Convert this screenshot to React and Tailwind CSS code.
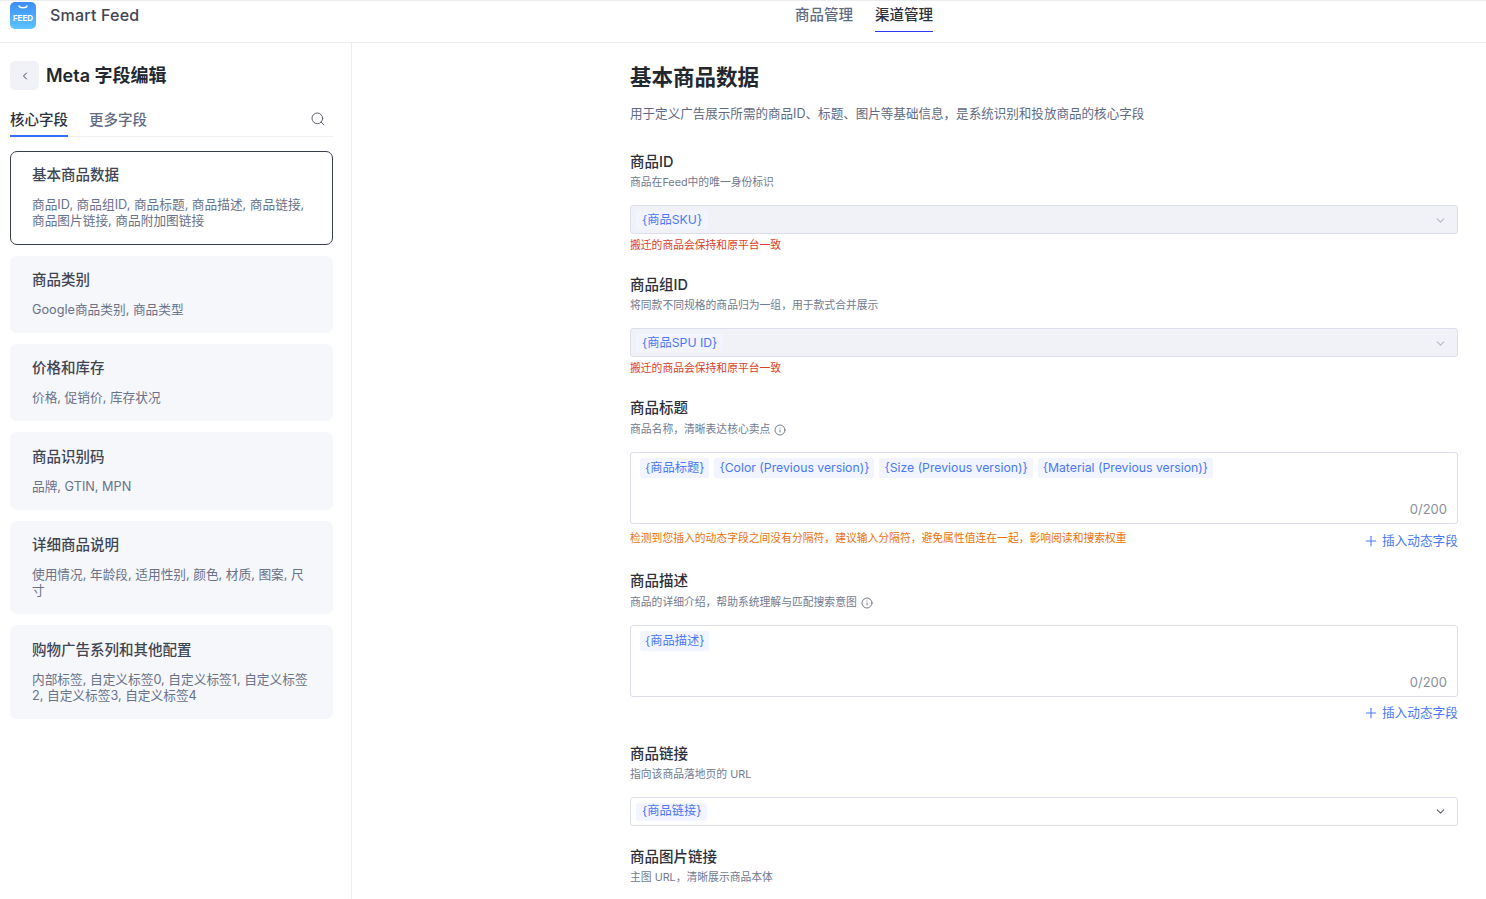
import React from "react";
import { ChevronDown, ChevronLeft, Info, Plus, Search } from "lucide-react";

const fontStack = "font-['Inter','Noto_Sans_CJK_SC',sans-serif]";

const groups = [
  { title: "基本商品数据", desc: "商品ID, 商品组ID, 商品标题, 商品描述, 商品链接, 商品图片链接, 商品附加图链接", active: true, h: "h-[94px] pt-[13px]" },
  { title: "商品类别", desc: "Google商品类别, 商品类型", h: "h-[77px] pt-[14px]" },
  { title: "价格和库存", desc: "价格, 促销价, 库存状况", h: "h-[77px] pt-[14px]" },
  { title: "商品识别码", desc: "品牌, GTIN, MPN", h: "h-[78px] pt-[15px]" },
  { title: "详细商品说明", desc: "使用情况, 年龄段, 适用性别, 颜色, 材质, 图案, 尺寸", h: "h-[93px] pt-[14px]" },
  { title: "购物广告系列和其他配置", desc: "内部标签, 自定义标签0, 自定义标签1, 自定义标签2, 自定义标签3, 自定义标签4", h: "h-[94px] pt-[15px]" },
];

const Chip = ({ children, compact }) => (
  <span
    className={`flex items-center rounded-[3px] bg-[#f2f5ff] text-[12.25px] text-[#4a78f5] whitespace-nowrap ${
      compact ? "h-[18px] px-[6px]" : "h-5 px-[5px]"
    }`}
  >
    {children}
  </span>
);

const FieldHead = ({ label, hint, info }) => (
  <div>
    <div className="text-[14.5px] leading-5 font-medium text-[#2b303b]">{label}</div>
    <div className={`flex items-center gap-1 text-[10.8px] leading-4 text-[#717a8f] ${info ? "mt-[4px]" : "mt-[3px]"}`}>
      {hint}
      {info && <Info size={12} strokeWidth={1.5} className="text-[#4b5161]" />}
    </div>
  </div>
);

const DisabledSelect = ({ value }) => (
  <div className="mt-[14px] h-[29px] flex items-center justify-between pl-[5px] pr-[10px] pt-[1px] rounded-[3px] border border-[#dcdfeb] bg-[#f0f2f8]">
    <Chip compact>{value}</Chip>
    <ChevronDown size={13} className="text-[#b4b9c6]" />
  </div>
);

const EditorBox = ({ chips }) => (
  <div className="mt-[14px] h-[72px] relative rounded-[3px] border border-[#dcdfeb] bg-white pl-[9px] pt-[5px]">
    <div className="flex gap-[5px]">
      {chips.map((c) => (
        <Chip key={c}>{c}</Chip>
      ))}
    </div>
    <span className="absolute right-[10px] bottom-[6px] text-[13px] leading-4 text-[#8a8f9b]">0/200</span>
  </div>
);

const InsertField = () => (
  <span className="flex items-center gap-[3px] text-[12.7px] leading-4 text-[#4a78f5] whitespace-nowrap">
    <Plus size={16} strokeWidth={1.6} />
    插入动态字段
  </span>
);

export default function App() {
  return (
    <div className={`${fontStack} h-[899px] overflow-hidden bg-white flex flex-col`}>
      {/* Top bar */}
      <header className="h-[43px] shrink-0 border-t border-b border-[#ebedf0] flex items-start relative">
        <div className="flex items-center pl-[10px] pt-[1px]">
          <div className="w-[26px] h-[27px] rounded-[5px] bg-gradient-to-b from-[#3f8cf7] to-[#5cc5fb] flex flex-col items-center">
            <svg width="12" height="5" viewBox="0 0 12 5" className="mt-[3px]">
              <path d="M2 1c1 2.4 7 2.4 8 0" fill="none" stroke="#fff" strokeWidth="1.4" strokeLinecap="round" />
            </svg>
            <span className="mt-[4px] text-[8px] leading-[9px] font-bold text-white">FEED</span>
          </div>
          <span className="ml-[14px] mb-[2px] text-base leading-6 font-medium text-[#3f4552] tracking-[0.2px]">Smart Feed</span>
        </div>
        <nav className="absolute left-[795px] top-0 flex gap-[22px] text-[14.5px] font-medium">
          <span className="h-[31px] pt-[4px] leading-5 text-[#5f6b85]">商品管理</span>
          <span className="h-[31px] pt-[4px] leading-5 text-[#2b303b] border-b border-[#2a3bef]">渠道管理</span>
        </nav>
      </header>

      <div className="flex flex-1 min-h-0">
        {/* Sidebar */}
        <aside className="w-[352px] shrink-0 border-r border-[#ebedf0] pl-[10px] pr-[18px] pt-[18px]">
          <div className="flex items-center gap-[7px]">
            <button className="w-[29px] h-[29px] rounded-[5px] bg-[#f0f2f8] flex items-center justify-center text-[#3c4250]">
              <ChevronLeft size={12} strokeWidth={2} />
            </button>
            <h1 className="text-lg leading-7 font-semibold text-[#23272f]">Meta 字段编辑</h1>
          </div>

          <div className="mt-[10px] h-[37px] flex items-center border-b border-[#f0f1f5]">
            <span className="h-[37px] pt-[1px] leading-[37px] text-[14.5px] font-medium text-[#2b303b] border-b-2 border-[#3370ff]">核心字段</span>
            <span className="ml-[21px] h-[37px] pt-[1px] leading-[37px] text-[14.5px] font-medium text-[#5f6b85]">更多字段</span>
            <Search size={16} strokeWidth={1.5} className="ml-auto mr-[7px] mt-[1px] text-[#5a6070]" />
          </div>

          <div className="mt-[14px] flex flex-col gap-[11px]">
            {groups.map((g) => (
              <div
                key={g.title}
                className={`${g.h} rounded-[7px] ${
                  g.active ? "px-[21px] bg-white border border-[#3a3f4c]" : "px-[22px] bg-[#f6f7fb]"
                }`}
              >
                <div className="text-[14.5px] leading-5 font-medium text-[#3f4552]">{g.title}</div>
                <p className="mt-[12px] text-[12.7px] leading-4 text-[#68728a]">{g.desc}</p>
              </div>
            ))}
          </div>
        </aside>

        {/* Form */}
        <main className="flex-1 min-w-0 overflow-hidden">
          <div className="w-[828px] ml-[278px] pt-[20px]">
            <h2 className="text-[21.5px] leading-7 font-semibold text-[#23272f]">基本商品数据</h2>
            <p className="mt-[15px] text-[12.55px] leading-4 text-[#5f6b85]">
              用于定义广告展示所需的商品ID、标题、图片等基础信息，是系统识别和投放商品的核心字段
            </p>

            <section className="mt-[30px]">
              <FieldHead label="商品ID" hint="商品在Feed中的唯一身份标识" />
              <DisabledSelect value="{商品SKU}" />
              <p className="mt-[4px] text-[10.8px] leading-4 text-[#d9402b]">搬迁的商品会保持和原平台一致</p>
            </section>

            <section className="mt-[21px]">
              <FieldHead label="商品组ID" hint="将同款不同规格的商品归为一组，用于款式合并展示" />
              <DisabledSelect value="{商品SPU ID}" />
              <p className="mt-[4px] text-[10.8px] leading-4 text-[#d9402b]">搬迁的商品会保持和原平台一致</p>
            </section>

            <section className="mt-[21px]">
              <FieldHead label="商品标题" hint="商品名称，清晰表达核心卖点" info />
              <EditorBox chips={["{商品标题}", "{Color (Previous version)}", "{Size (Previous version)}", "{Material (Previous version)}"]} />
              <div className="mt-[7px] flex items-start justify-between">
                <p className="text-[10.8px] leading-4 text-[#e8710a]">
                  检测到您插入的动态字段之间没有分隔符，建议输入分隔符，避免属性值连在一起，影响阅读和搜索权重
                </p>
                <span className="mt-[2px]">
                  <InsertField />
                </span>
              </div>
            </section>

            <section className="mt-[22px]">
              <FieldHead label="商品描述" hint="商品的详细介绍，帮助系统理解与匹配搜索意图" info />
              <EditorBox chips={["{商品描述}"]} />
              <div className="mt-[8px] flex justify-end">
                <InsertField />
              </div>
            </section>

            <section className="mt-[23px]">
              <FieldHead label="商品链接" hint="指向该商品落地页的 URL" />
              <div className="mt-[14px] h-[29px] flex items-center justify-between pl-[5px] pr-[10px] rounded-[3px] border border-[#dcdfeb] bg-white">
                <Chip compact>{"{商品链接}"}</Chip>
                <ChevronDown size={13} className="text-[#5a6070]" />
              </div>
            </section>

            <section className="mt-[21px]">
              <FieldHead label="商品图片链接" hint="主图 URL，清晰展示商品本体" />
            </section>
          </div>
        </main>
      </div>
    </div>
  );
}
